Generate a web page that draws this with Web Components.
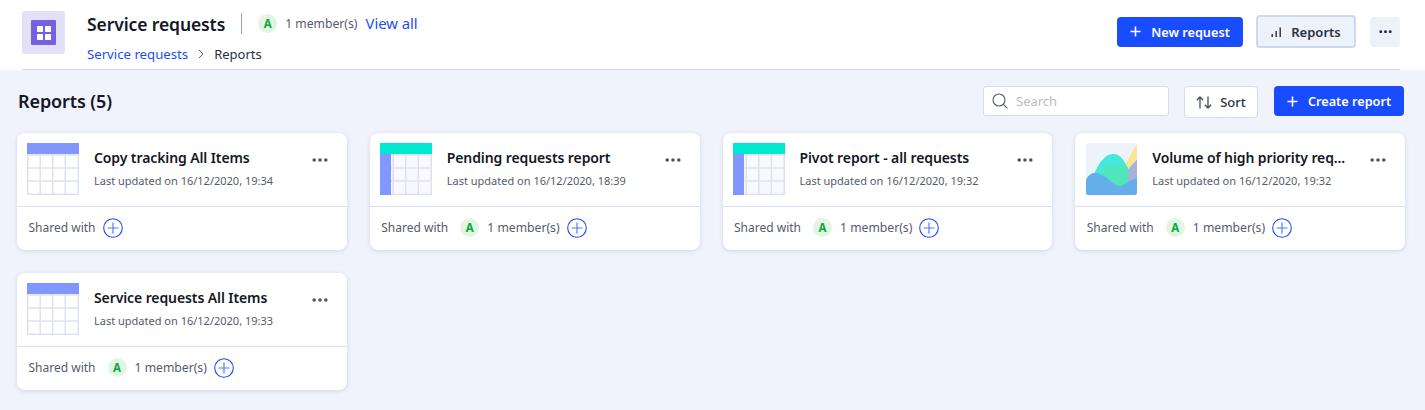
<!DOCTYPE html>
<html>
<head>
<meta charset="utf-8">
<title>Service requests - Reports</title>
<style>
  html, body { margin: 0; padding: 0; }
  body { background: #f0f3fb; font-family: "Noto Sans", sans-serif; color: #131726; }
</style>
</head>
<body>
<app-page></app-page>
<script>
const PLUS = `<svg width="11" height="11" viewBox="0 0 12 12"><path d="M6 .5v11M.5 6h11" stroke="currentColor" stroke-width="1.7" fill="none"/></svg>`;
const DOTS = `<svg width="16" height="4" viewBox="0 0 16 4"><circle cx="2.2" cy="2" r="1.8" fill="currentColor"/><circle cx="8" cy="2" r="1.8" fill="currentColor"/><circle cx="13.8" cy="2" r="1.8" fill="currentColor"/></svg>`;

class MemberChip extends HTMLElement {
    constructor() {
        super();
        this.attachShadow({mode: 'open'});
        this.shadowRoot.innerHTML = `
        <style>
            :host { display: inline-flex; align-items: center; gap: 8px; font-size: 12.2px; color: #565b6e; }
            .avatar {
                width: 19px; height: 19px; border-radius: 50%;
                background: #e2f5e3; color: #0ba83c;
                display: flex; align-items: center; justify-content: center;
                font-size: 11.5px; font-weight: 700;
            }
        </style>
        <span class="avatar">A</span><span>1 member(s)</span>`;
    }
}
customElements.define('member-chip', MemberChip);

class AppButton extends HTMLElement {
    constructor() {
        super();
        this.attachShadow({mode: 'open'});
        this.shadowRoot.innerHTML = `
        <style>
            :host {
                display: inline-flex; align-items: center; justify-content: center; box-sizing: border-box;
                height: 30px; border-radius: 4px; font-size: 12.7px; font-weight: 600; gap: 10px;
            }
            :host([kind="primary"]) { background: #1a4cff; color: #fff; }
            :host([kind="selected"]) { background: #edf1f9; color: #2b3040; border: 2px solid #cfd9ec; height: 33px; font-size: 13px; gap: 9px; }
            :host([kind="soft"]) { background: #edf1f9; color: #2b3040; }
            :host([kind="outline"]) { background: #fff; color: #2b3040; border: 1px solid #d3ddf0; height: 32px; font-size: 13px; font-weight: 500; gap: 8px; }
            ::slotted(svg) { display: block; flex: none; }
        </style>
        <slot></slot>`;
    }
}
customElements.define('app-button', AppButton);

class AppHeader extends HTMLElement {
    constructor() {
        super();
        this.attachShadow({mode: 'open'});
        this.shadowRoot.innerHTML = `
        <style>
            :host { display: block; background: #fff; padding: 0 25px 0 22px; }
            .inner { height: 69px; border-bottom: 1px solid #d3dbea; display: flex; justify-content: space-between; align-items: flex-start; }
            .left { display: flex; gap: 22px; padding-top: 11px; }
            .logo { width: 43px; height: 43px; border-radius: 3px; background: #e3e0f9; display: flex; align-items: center; justify-content: center; }
            .logo div { width: 25px; height: 25px; border-radius: 1px; background: #7760e0; display: flex; align-items: center; justify-content: center; }
            .titles { display: flex; flex-direction: column; gap: 10px; }
            .top { display: flex; align-items: center; height: 24px; }
            h1 { margin: 2px 0 0; font-size: 17.5px; font-weight: 600; line-height: 24px; letter-spacing: -.1px; }
            .sep { width: 1px; height: 21px; background: #9aa3b5; margin: 0 16px; }
            a { color: #1a4cff; text-decoration: none; }
            .view { font-size: 14.8px; margin-left: 8px; }
            .crumbs { display: flex; align-items: center; font-size: 13px; color: #2b3040; line-height: 18px; }
            .crumbs a { font-size: 13.2px; }
            .crumbs svg { margin: 0 10px; }
            .right { display: flex; align-items: center; padding-top: 15px; }
            .new { width: 126px; margin-right: 13px; }
            .reports { width: 100px; margin-right: 14px; }
            .more { width: 30px; }
        </style>
        <div class="inner">
            <div class="left">
                <div class="logo"><div><svg width="14" height="14" viewBox="0 0 14 14" fill="#fff"><rect width="6" height="6" rx=".6"/><rect x="8" width="6" height="6" rx=".6"/><rect y="8" width="6" height="6" rx=".6"/><rect x="8" y="8" width="6" height="6" rx=".6"/></svg></div></div>
                <div class="titles">
                    <div class="top">
                        <h1>Service requests</h1><span class="sep"></span>
                        <member-chip></member-chip>
                        <a class="view">View all</a>
                    </div>
                    <div class="crumbs"><a>Service requests</a><svg width="6" height="10" viewBox="0 0 6 10"><path d="M1 1l4 4-4 4" fill="none" stroke="#565b6e" stroke-width="1"/></svg><span>Reports</span></div>
                </div>
            </div>
            <div class="right">
                <app-button kind="primary" class="new">${PLUS}New request</app-button>
                <app-button kind="selected" class="reports"><svg width="11" height="12" viewBox="0 0 11 12" fill="#2b3040"><rect x=".5" y="8" width="1.4" height="3"/><rect x="4.5" y="5" width="1.4" height="6"/><rect x="8.5" y="1.5" width="1.4" height="9.5"/></svg>Reports</app-button>
                <app-button kind="soft" class="more">${DOTS.replace('width="16"','width="13"').replace('height="4"','height="3.4"')}</app-button>
            </div>
        </div>`;
    }
}
customElements.define('app-header', AppHeader);

class ReportsToolbar extends HTMLElement {
    constructor() {
        super();
        this.attachShadow({mode: 'open'});
        this.shadowRoot.innerHTML = `
        <style>
            :host { display: flex; align-items: flex-start; padding: 16px 21px 0 18px; height: 47px; }
            h2 { margin: 0; font-size: 18px; font-weight: 600; line-height: 30px; flex: 1; letter-spacing: -.1px; }
            .search {
                box-sizing: border-box; width: 186px; height: 30px; margin-right: 15px;
                background: #fff; border: 1px solid #d3ddf0; border-radius: 3px;
                display: flex; align-items: center; gap: 8px; padding-left: 8px;
                font-size: 13px; color: #b9bcc4;
            }
            .sort { width: 74px; margin-right: 16px; }
            .create { width: 130px; }
        </style>
        <h2>Reports (5)</h2>
        <div class="search"><svg width="16" height="16" viewBox="0 0 16 16" fill="none" stroke="#565b6e" stroke-width="1.1"><circle cx="7" cy="7" r="6"/><path d="M11.4 11.4l4 4"/></svg>Search</div>
        <app-button kind="outline" class="sort"><svg width="16" height="13" viewBox="0 0 16 13" fill="none" stroke="#4a4f60" stroke-width="1.3"><path d="M4 12.5V1M.8 4.2L4 1l3.2 3.2M12 .5V12M8.8 8.8L12 12l3.2-3.2"/></svg>Sort</app-button>
        <app-button kind="primary" class="create">${PLUS}Create report</app-button>`;
    }
}
customElements.define('reports-toolbar', ReportsToolbar);

class ReportThumb extends HTMLElement {
    constructor() {
        super();
        this.attachShadow({mode: 'open'});
    }
    connectedCallback() {
        const kind = this.getAttribute('kind');
        let body = '';
        if (kind === 'chart') {
            // the chart picture sits 1px further in than the table ones
            body = `<g transform="translate(1 0)">
            <rect width="51" height="52" rx="2" fill="#eef2fa"/>
            <path d="M38 24C43 16 47 6 51 2V38H42Z" fill="#fae68f"/>
            <path d="M0 37C3 32 6 30 9 30L20 42H0Z" fill="#a3aef7"/>
            <path d="M8 31C13 20 19 11 27 11C35 11 38 18 42 25C45 30 46 36 44 42L30 46L14 38Z" fill="#45e8dc"/>
            <path d="M19 22C26 25 33 23 39 20C41 24 46 32 44 42L30 46L16 36Z" fill="#4fe6bc"/>
            <path d="M42 27C44 24 47 20 51 17V38L42 42Z" fill="#aab0dc"/>
            <path d="M0 37C2 33 5 30 8 30C13 30 17 32 21 35C25 39 29 43 34 43C38 43 42 38 46 37L51 35V50a2 2 0 0 1-2 2H2a2 2 0 0 1-2-2Z" fill="#64aeea"/>
            </g>`;
        } else {
            const pivot = kind === 'pivot';
            const xs = [0.75, 13.25, 25.75, 38.25, 51.25];
            const ys = [12, 25, 38, 51.25];
            body = `<rect width="52" height="52" fill="${pivot ? '#f7f9fe' : '#fff'}"/>`;
            xs.forEach(x => { body += `<path d="M${x} 0V52" stroke="#dfe2ee" stroke-width="1.5"/>`; });
            ys.forEach(y => { body += `<path d="M0 ${y}H52" stroke="#dfe2ee" stroke-width="1.5"/>`; });
            if (pivot) body += `<rect y="11" width="11" height="41" fill="#8196ff"/>`;
            body += `<rect width="52" height="11" fill="${pivot ? '#00e8cf' : '#8196ff'}"/>`;
        }
        this.shadowRoot.innerHTML = `
        <style>:host { display: block; width: 52px; height: 52px; } svg { display: block; }</style>
        <svg width="52" height="52" viewBox="0 0 52 52">${body}</svg>`;
    }
}
customElements.define('report-thumb', ReportThumb);

class ReportCard extends HTMLElement {
    constructor() {
        super();
        this.attachShadow({mode: 'open'});
    }
    connectedCallback() {
        const shared = this.hasAttribute('shared');
        this.shadowRoot.innerHTML = `
        <style>
            :host { display: block; background: #fff; border-radius: 8px; box-shadow: 0 1px 4px rgba(40,60,110,.16); height: 117px; }
            .top { height: 74px; box-sizing: border-box; border-bottom: 1px solid #d9e0f0; padding: 10px 19px 0 10px; display: flex; gap: 15px; }
            .text { flex: 1; min-width: 0; padding-top: 5px; }
            .title { font-size: 14px; font-weight: 600; line-height: 20px; white-space: nowrap; letter-spacing: -.1px; }
            .sub { font-size: 11px; line-height: 16px; color: #565b6e; margin-top: 5px; white-space: nowrap; }
            .dots { color: #4f5466; padding-top: 13px; line-height: 0; }
            .bottom { display: flex; align-items: center; height: 41px; padding-left: 11.5px; font-size: 12px; color: #565b6e; }
            member-chip { margin-left: 12px; }
            .add { margin-left: 7px; display: block; }
        </style>
        <div class="top">
            <report-thumb kind="${this.getAttribute('thumb') || 'table'}"></report-thumb>
            <div class="text"><div class="title"><slot></slot></div><div class="sub">Last updated on ${this.getAttribute('updated')}</div></div>
            <div class="dots">${DOTS}</div>
        </div>
        <div class="bottom">
            <span>Shared with</span>
            ${shared ? '<member-chip></member-chip>' : ''}
            <svg class="add" width="20" height="20" viewBox="0 0 20 20" fill="none"><circle cx="10" cy="10" r="9.3" stroke="#1a4cff" stroke-width="1.1"/><path d="M10 4.5v11M4.5 10h11" stroke="#5577ff" stroke-width="1.2"/></svg>
        </div>`;
    }
}
customElements.define('report-card', ReportCard);

class AppPage extends HTMLElement {
    constructor() {
        super();
        this.attachShadow({mode: 'open'});
        this.shadowRoot.innerHTML = `
        <style>
            :host { display: block; height: 410px; overflow: hidden; }
            .grid { display: grid; grid-template-columns: repeat(4, 1fr); gap: 23px; padding: 0 20px 0 17px; }
        </style>
        <app-header></app-header>
        <reports-toolbar></reports-toolbar>
        <div class="grid">
            <report-card updated="16/12/2020, 19:34">Copy tracking All Items</report-card>
            <report-card thumb="pivot" shared updated="16/12/2020, 18:39">Pending requests report</report-card>
            <report-card thumb="pivot" shared updated="16/12/2020, 19:32">Pivot report - all requests</report-card>
            <report-card thumb="chart" shared updated="16/12/2020, 19:32">Volume of high priority req...</report-card>
            <report-card shared updated="16/12/2020, 19:33">Service requests All Items</report-card>
        </div>`;
    }
}
customElements.define('app-page', AppPage);
</script>
</body>
</html>
